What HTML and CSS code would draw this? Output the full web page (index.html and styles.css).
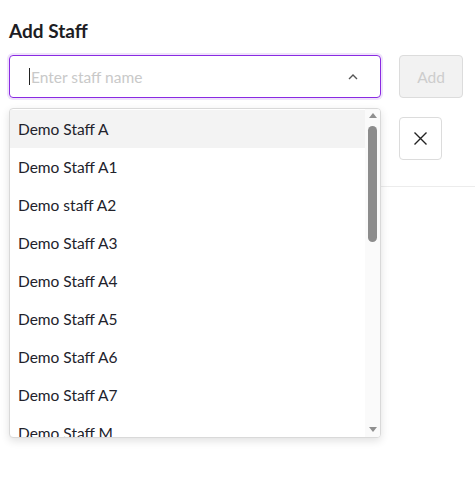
FILE: index.html
```html
<!DOCTYPE html>
<html>
<head>
<meta charset="utf-8">
<link rel="stylesheet" href="styles.css">
</head>
<body>
<div class="page">
  <h1 class="title">Add Staff</h1>
  <div class="row">
    <div class="select-wrap">
      <div class="select">
        <span class="caret"></span>
        <span class="placeholder">Enter staff name</span>
        <svg class="chevron" width="12" height="8" viewBox="0 0 12 8"><path d="M2 6 L6 2 L10 6" fill="none" stroke="#555" stroke-width="1.4"/></svg>
      </div>
      <div class="dropdown">
        <ul class="list">
          <li class="item active">Demo Staff A</li>
          <li class="item">Demo Staff A1</li>
          <li class="item">Demo staff A2</li>
          <li class="item">Demo Staff A3</li>
          <li class="item">Demo Staff A4</li>
          <li class="item">Demo Staff A5</li>
          <li class="item">Demo Staff A6</li>
          <li class="item">Demo Staff A7</li>
          <li class="item">Demo Staff M</li>
        </ul>
        <div class="scrollbar">
          <span class="arrow up"></span>
          <span class="thumb"></span>
          <span class="spacer"></span>
          <span class="arrow down"></span>
        </div>
      </div>
    </div>
    <button class="btn add">Add</button>
  </div>
  <div class="row second">
    <div class="spacer-col"></div>
    <button class="btn close">
      <svg width="15" height="15" viewBox="0 0 15 15"><path d="M1.5 1.5 L13.5 13.5 M13.5 1.5 L1.5 13.5" stroke="#222" stroke-width="1.4" fill="none"/></svg>
    </button>
  </div>
  <div class="divider"></div>
</div>
</body>
</html>
```
FILE: styles.css
```css
* { box-sizing: border-box; }
html, body { margin: 0; padding: 0; background: #fff; }
body { font-family: Lato, "Noto Sans", sans-serif; color: #22222b; }
.page { padding: 18px 12px 0 9px; min-height: 477px; }
.title { margin: 0 0 11px 0; font-size: 19px; font-weight: 700; line-height: 26px; color: #1d1d24; }
.row { display: flex; gap: 18px; align-items: flex-start; }
.select-wrap { position: relative; flex: 1; }
.select {
  height: 43px; border: 1.5px solid #8a2be2; border-radius: 4px;
  box-shadow: 0 0 0 2px #efe3fb;
  display: flex; align-items: center; padding: 0 21px 0 19px;
}
.caret { width: 1px; height: 17px; background: #222; margin-right: 1px; }
.placeholder { flex: 1; font-size: 15.5px; color: #c9c9c9; }
.chevron { display: block; }
.btn {
  width: 64px; height: 43px; border: 1px solid #dcdcdc; border-radius: 4px;
  font-family: inherit; font-size: 15.5px; padding: 0;
  display: flex; align-items: center; justify-content: center;
}
.add { background: #f2f2f2; color: #cdcdcd; }
.second { margin-top: 19px; }
.spacer-col { flex: 1; }
.close { width: 43px; background: #fff; margin-right: 21px; }
.divider { height: 1px; background: #ececec; margin-top: 26px; margin-right: -12px; }
.dropdown {
  position: absolute; top: 53px; left: 0; width: 372px; height: 330px;
  background: #fff; border: 1px solid #d9d9d9; border-radius: 4px;
  box-shadow: 0 3px 8px rgba(0,0,0,0.12);
  display: flex; overflow: hidden; z-index: 5;
}
.list { list-style: none; margin: 0; padding: 1px 0 0 0; flex: 1; overflow: hidden; }
.item { height: 38px; line-height: 38px; padding-left: 8px; font-size: 15.5px; color: #22222b; }
.item.active { background: #f3f3f3; }
.scrollbar { width: 15px; background: #fafafa; display: flex; flex-direction: column; align-items: center; padding: 4px 0 5px; }
.arrow { width: 0; height: 0; border-left: 4.5px solid transparent; border-right: 4.5px solid transparent; }
.arrow.up { border-bottom: 5px solid #8f8f8f; }
.arrow.down { border-top: 5px solid #8f8f8f; }
.thumb { width: 9px; height: 116px; background: #8c8c8c; border-radius: 5px; margin-top: 8px; }
.spacer { flex: 1; }
```
